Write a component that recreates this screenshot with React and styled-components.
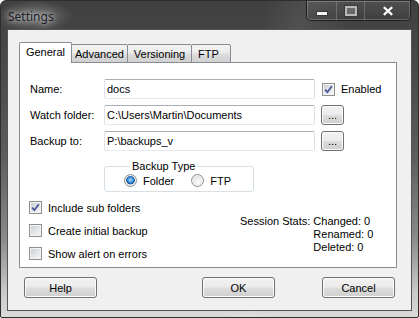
import React from 'react'
import styled, { createGlobalStyle } from 'styled-components'

const GlobalStyle = createGlobalStyle`
  html, body {
    margin: 0;
    padding: 0;
    background: #fff;
  }
  body {
    font-family: "Liberation Sans", Arial, sans-serif;
    font-size: 11px;
    color: #000;
  }
`

const Window = styled.div`
  width: 419px;
  height: 318px;
  box-sizing: border-box;
  display: flex;
  flex-direction: column;
  padding: 0 6px 6px 6px;
  border: 1px solid #2e2e2e;
  border-radius: 6px 6px 2px 2px;
  background:
    radial-gradient(ellipse 38px 16px at 34px 15px, rgba(255,255,255,0.28), transparent),
    linear-gradient(100deg, transparent 56%, rgba(255,255,255,0.07) 64%, transparent 74%),
    linear-gradient(to bottom, #404040 0%, #4b4b4b 25%, #5e5e5e 50%, #8a8a8a 75%, #c9c9c9 92%, #dadada 100%);
`

const TitleBar = styled.div`
  height: 28px;
  display: flex;
  justify-content: space-between;
  align-items: flex-start;
  flex-shrink: 0;
`

const Title = styled.span`
  margin: 7px 0 0 1px;
  font-family: "Noto Sans", "Open Sans", sans-serif;
  font-size: 12px;
  color: #1c1c2a;
  text-shadow: 0 0 5px rgba(255,255,255,0.7), 0 0 9px rgba(255,255,255,0.5);
`

const Controls = styled.div`
  display: flex;
  height: 19px;
  margin-right: 1px;
  border: 1px solid rgba(20,20,20,0.8);
  border-top: none;
  border-radius: 0 0 5px 5px;
  box-shadow: inset 0 0 0 1px rgba(255,255,255,0.22);
  overflow: hidden;
`

const CtrlButton = styled.div`
  width: ${p => p.w}px;
  display: flex;
  align-items: center;
  justify-content: center;
  border-left: ${p => (p.first ? 'none' : '1px solid rgba(255,255,255,0.2)')};
  background: linear-gradient(to bottom, rgba(255,255,255,0.08), rgba(0,0,0,0.05));
`

const MinIcon = styled.span`
  width: 10px;
  height: 3px;
  margin-top: 6px;
  background: #f4f4f4;
  border: 1px solid #3a3a3a;
`

const MaxIcon = styled.span`
  width: 8px;
  height: 6px;
  border: 2px solid #b9b9b9;
  background: #6a6a6a;
  outline: 1px solid #3a3a3a;
`

const Client = styled.div`
  flex: 1;
  display: flex;
  flex-direction: column;
  padding: 12px 16px 0 11px;
  border: 1px solid #555;
  background: #f0f0f0;
`

const TabStrip = styled.div`
  display: flex;
  align-items: flex-end;
  height: 21px;
  margin-bottom: -1px;
  margin-right: -2px;
`

const Tab = styled.div`
  position: relative;
  z-index: ${p => (p.active ? 2 : 1)};
  box-sizing: border-box;
  width: ${p => p.w}px;
  height: ${p => (p.active ? 21 : 19)}px;
  margin-left: ${p => (p.first ? 0 : -1)}px;
  padding: 3px 0 0 ${p => p.pad || 0}px;
  display: flex;
  justify-content: ${p => (p.pad ? 'flex-start' : 'center')};
  line-height: 13px;
  border: 1px solid #898c95;
  border-bottom: ${p => (p.active ? 'none' : '1px solid #898c95')};
  border-radius: 2px 2px 0 0;
  background: ${p =>
    p.active
      ? '#fff'
      : 'linear-gradient(to bottom, #f3f3f3 0%, #ebebeb 48%, #dddddd 52%, #d0d0d0 100%)'};
`

const Panel = styled.div`
  height: 206px;
  margin-right: -2px;
  box-sizing: border-box;
  padding: 16px 0 0 10px;
  border: 1px solid #898c95;
  background: #fff;
  display: flex;
  flex-direction: column;
`

const FieldGrid = styled.div`
  display: grid;
  grid-template-columns: 68px 211px auto;
  grid-auto-rows: 20px;
  row-gap: 6px;
  column-gap: 6px;
  align-items: center;
`

const Label = styled.span`
  line-height: 13px;
`

const TextBox = styled.div`
  box-sizing: border-box;
  height: 20px;
  padding: 0 2px;
  display: flex;
  align-items: center;
  border: 1px solid;
  border-color: #abadb3 #dbdfe6 #e3e9ef #e2e3ea;
  border-radius: 2px;
  background: #fff;
`

const Button = styled.div`
  box-sizing: border-box;
  width: ${p => p.w || 73}px;
  height: ${p => p.h || 21}px;
  display: flex;
  align-items: center;
  justify-content: center;
  border: 1px solid #707070;
  border-radius: 3px;
  box-shadow: inset 0 0 0 1px #fcfcfc;
  background: linear-gradient(to bottom, #f2f2f2 0%, #ebebeb 48%, #dddddd 52%, #cfcfcf 100%);
`

const CheckRow = styled.label`
  display: flex;
  align-items: center;
  gap: 6px;
  height: 13px;
  margin-left: ${p => p.shift || 0}px;
`

const Box = styled.span`
  box-sizing: border-box;
  width: 13px;
  height: 13px;
  flex-shrink: 0;
  display: flex;
  align-items: center;
  justify-content: center;
  border: 1px solid #8e8f8f;
  box-shadow: inset 0 0 0 1px #f4f4f4;
  background: linear-gradient(135deg, #c5cad1 0%, #e4e6e8 55%, #f7f7f7 100%);
`

const Round = styled.span`
  box-sizing: border-box;
  width: 13px;
  height: 13px;
  flex-shrink: 0;
  border-radius: 50%;
  border: 1px solid #8e8f8f;
  box-shadow: inset 0 0 0 1px #f4f4f4;
  background: ${p =>
    p.checked
      ? 'radial-gradient(circle at 50% 45%, #a9dcfb 0%, #2f88d5 36%, #1b4f8c 50%, #d9dcdf 58%, #eef0f1 100%)'
      : 'radial-gradient(circle at 60% 65%, #fbfbfb 0%, #e3e4e6 60%, #c8cbcf 100%)'};
`

const Group = styled.fieldset`
  width: 150px;
  box-sizing: border-box;
  margin: 9px 0 0 74px;
  padding: 1px 0 4px 19px;
  border: 1px solid #d5dfe5;
  border-radius: 3px;
  min-inline-size: auto;
`

const Legend = styled.legend`
  margin-left: 6px;
  padding: 0 2px;
  line-height: 13px;
`

const RadioRow = styled.div`
  display: flex;
  gap: 17px;
`

const Lower = styled.div`
  display: flex;
  margin-top: 9px;
`

const CheckColumn = styled.div`
  width: 211px;
  display: flex;
  flex-direction: column;
  gap: 10px;
  margin-left: -1px;
`

const Stats = styled.div`
  display: grid;
  grid-template-columns: auto auto;
  column-gap: 3px;
  grid-auto-rows: 13px;
  line-height: 13px;
  margin-top: 14px;
`

const ButtonRow = styled.div`
  display: flex;
  margin-top: 9px;
  margin-left: 5px;
  gap: 47px;
`

const Spacer = styled.div`
  flex: 1;
`

const CheckMark = () => (
  <svg width="9" height="9" viewBox="0 0 9 9">
    <path d="M1.2 4.6 L3.4 7.2 L7.8 1.2" fill="none" stroke="#40529a" strokeWidth="1.7" />
  </svg>
)

const Checkbox = ({ checked, children, shift }) => (
  <CheckRow shift={shift}>
    <Box>{checked && <CheckMark />}</Box>
    {children}
  </CheckRow>
)

const Radio = ({ checked, children }) => (
  <CheckRow>
    <Round checked={checked} />
    {children}
  </CheckRow>
)

const App = () => {
  return (
    <Window>
      <GlobalStyle />
      <TitleBar>
        <Title>Settings</Title>
        <Controls>
          <CtrlButton w={29} first>
            <MinIcon />
          </CtrlButton>
          <CtrlButton w={27}>
            <MaxIcon />
          </CtrlButton>
          <CtrlButton w={45}>
            <svg width="12" height="10" viewBox="0 0 12 10">
              <path d="M1.5 1 L10.5 9 M10.5 1 L1.5 9" stroke="#3a3a3a" strokeWidth="4" />
              <path d="M1.8 1.2 L10.2 8.8 M10.2 1.2 L1.8 8.8" stroke="#f6f6f6" strokeWidth="2.4" />
            </svg>
          </CtrlButton>
        </Controls>
      </TitleBar>
      <Client>
        <TabStrip>
          <Tab w={53} first active>General</Tab>
          <Tab w={57}>Advanced</Tab>
          <Tab w={65}>Versioning</Tab>
          <Tab w={40} pad={6}>FTP</Tab>
        </TabStrip>
        <Panel>
          <FieldGrid>
            <Label>Name:</Label>
            <TextBox>docs</TextBox>
            <Checkbox checked shift={1}>Enabled</Checkbox>
            <Label>Watch folder:</Label>
            <TextBox>C:\Users\Martin\Documents</TextBox>
            <Button w={23} h={20}>...</Button>
            <Label>Backup to:</Label>
            <TextBox>P:\backups_v</TextBox>
            <Button w={23} h={20}>...</Button>
          </FieldGrid>
          <Group>
            <Legend>Backup Type</Legend>
            <RadioRow>
              <Radio checked>Folder</Radio>
              <Radio>FTP</Radio>
            </RadioRow>
          </Group>
          <Lower>
            <CheckColumn>
              <Checkbox checked>Include sub folders</Checkbox>
              <Checkbox>Create initial backup</Checkbox>
              <Checkbox>Show alert on errors</Checkbox>
            </CheckColumn>
            <Stats>
              <span>Session Stats:</span>
              <span>Changed: 0</span>
              <span />
              <span>Renamed: 0</span>
              <span />
              <span>Deleted: 0</span>
            </Stats>
          </Lower>
        </Panel>
        <ButtonRow>
          <Button>Help</Button>
          <Spacer />
          <Button>OK</Button>
          <Button>Cancel</Button>
        </ButtonRow>
      </Client>
    </Window>
  )
}

export default App
